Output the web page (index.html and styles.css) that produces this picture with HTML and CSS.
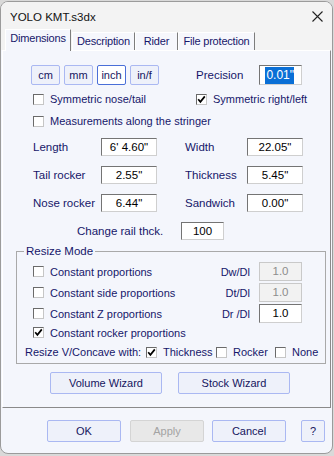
FILE: index.html
```html
<!DOCTYPE html>
<html>
	<head>
		<meta charset="UTF-8">
		<title>YOLO KMT.s3dx</title>
		<link rel="stylesheet" href="styles.css">
	</head>
	<body>
		<div class="window">
			<!-- title bar -->
			<div class="titlebar">
				<span class="title">YOLO KMT.s3dx</span>
				<svg class="close" width="11" height="11" viewBox="0 0 11 11">
					<path d="M0.5 0.5 L10.5 10.5 M10.5 0.5 L0.5 10.5" stroke="#222" stroke-width="1.1" fill="none"/>
				</svg>
			</div>

			<!-- tabs -->
			<div class="tabs">
				<div class="tab active">Dimensions</div>
				<div class="tab t-desc">Description</div>
				<div class="tab t-rider">Rider</div>
				<div class="tab t-file">File protection</div>
			</div>

			<div class="panel">
				<div class="units-row">
					<div class="units">
						<div class="btn unit">cm</div>
						<div class="btn unit">mm</div>
						<div class="btn unit on">inch</div>
						<div class="btn unit">in/f</div>
					</div>
					<span class="precision-label">Precision</span>
					<div class="field precision"><span class="sel">0.01"</span></div>
				</div>

				<div class="check-row first">
					<div class="check wide"><span class="box"></span>Symmetric nose/tail</div>
					<div class="check"><span class="box"><svg width="9" height="9" viewBox="0 0 9 9"><path d="M1.2 4.2 L3.4 6.8 L7.8 1.4" stroke="#000" stroke-width="1.7" fill="none"/></svg></span>Symmetric right/left</div>
				</div>
				<div class="check-row">
					<div class="check"><span class="box"></span>Measurements along the stringer</div>
				</div>

				<div class="dims">
					<span class="lbl">Length</span>
					<div class="field">6' 4.60"</div>
					<span></span>
					<span class="lbl">Width</span>
					<div class="field">22.05"</div>

					<span class="lbl">Tail rocker</span>
					<div class="field">2.55"</div>
					<span></span>
					<span class="lbl">Thickness</span>
					<div class="field">5.45"</div>

					<span class="lbl">Nose rocker</span>
					<div class="field">6.44"</div>
					<span></span>
					<span class="lbl">Sandwich</span>
					<div class="field">0.00"</div>
				</div>

				<div class="rail-row">
					<span class="lbl rail-lbl">Change rail thck.</span>
					<div class="field rail">100</div>
				</div>

				<fieldset class="group">
					<legend>Resize Mode</legend>
					<div class="resize-row">
						<div class="check rcol"><span class="box"></span>Constant proportions</div>
						<span class="ratio">Dw/Dl</span>
						<div class="field ratio-in off">1.0</div>
					</div>
					<div class="resize-row">
						<div class="check rcol"><span class="box"></span>Constant side proportions</div>
						<span class="ratio">Dt/Dl</span>
						<div class="field ratio-in off">1.0</div>
					</div>
					<div class="resize-row">
						<div class="check rcol"><span class="box"></span>Constant Z proportions</div>
						<span class="ratio">Dr /Dl</span>
						<div class="field ratio-in">1.0</div>
					</div>
					<div class="resize-row last">
						<div class="check rcol"><span class="box"><svg width="9" height="9" viewBox="0 0 9 9"><path d="M1.2 4.2 L3.4 6.8 L7.8 1.4" stroke="#000" stroke-width="1.7" fill="none"/></svg></span>Constant rocker proportions</div>
					</div>
					<div class="concave-row">
						<span class="concave-lbl">Resize V/Concave with:</span>
						<div class="check c-thick"><span class="box"><svg width="9" height="9" viewBox="0 0 9 9"><path d="M1.2 4.2 L3.4 6.8 L7.8 1.4" stroke="#000" stroke-width="1.7" fill="none"/></svg></span>Thickness</div>
						<div class="check c-rock"><span class="box"></span>Rocker</div>
						<div class="check"><span class="box"></span>None</div>
					</div>
				</fieldset>

				<div class="wizard-row">
					<div class="btn wizard">Volume Wizard</div>
					<div class="btn wizard">Stock Wizard</div>
				</div>
			</div>

			<!-- bottom buttons -->
			<div class="footer">
				<div class="btn action">OK</div>
				<div class="btn action disabled">Apply</div>
				<div class="btn action">Cancel</div>
				<div class="btn help">?</div>
			</div>
		</div>
	</body>
</html>
```

FILE: styles.css
```css
*{
	margin: 0;
	padding: 0;
	box-sizing: border-box;
}
body{
	background-color: #d9d9d9;
	font-family: "Liberation Sans", Arial, sans-serif;
	font-size: 11px;
	color: #16166a;
	overflow: hidden;
}
.window{
	width: 333px;
	height: 453px;
	margin-top: 1px;
	border: 1px solid #9b9b9b;
	border-radius: 8px;
	background-color: #f4f6fc;
	overflow: hidden;
	display: flex;
	flex-direction: column;
}

/* title bar */
.titlebar{
	height: 27px;
	background-color: #f3f3f3;
	display: flex;
	align-items: center;
	justify-content: space-between;
	padding: 2px 9px 0 9px;
}
.title{
	color: #111;
	font-size: 11.5px;
}
.close{
	display: block;
}

/* tabs */
.tabs{
	height: 21px;
	background-color: #f3f3f3;
	display: flex;
	align-items: flex-end;
	padding-left: 4px;
	position: relative;
	z-index: 1;
}
.tab{
	height: 18px;
	line-height: 17px;
	text-align: center;
	background-color: #f6f7fc;
	border-top: 1px solid #fff;
	border-left: 1px solid #fff;
	border-right: 1px solid #7d7d7d;
	font-size: 11px;
	letter-spacing: -0.2px;
}
.tab.active{
	width: 66px;
	height: 22px;
	line-height: 16px;
	margin-bottom: -1px;
	background-color: #f4f6fc;
}
.t-desc{
	width: 63px;
	margin-left: 1px;
}
.t-rider{
	width: 43px;
}
.t-file{
	width: 77px;
}

/* main panel */
.panel{
	margin: 0 1px 0 1px;
	border-top: 1px solid #fff;
	border-left: 1px solid #fff;
	border-right: 1px solid #8a8a8a;
	border-bottom: 1px solid #8a8a8a;
	padding-bottom: 13px;
}

.btn{
	background-color: #eef1fa;
	border: 1px solid #aab8f2;
	border-radius: 2px;
	text-align: center;
	color: #15155e;
}

.units-row{
	display: flex;
	align-items: center;
	height: 20px;
	margin-top: 14px;
	padding-left: 28px;
}
.units{
	display: flex;
	gap: 4px;
}
.unit{
	width: 29px;
	height: 20px;
	line-height: 18px;
}
.unit.on{
	background-color: #fff;
	border-color: #4a6fd8;
}
.precision-label{
	width: 63px;
	margin-left: 37px;
	font-size: 11.5px;
}

.field{
	height: 18px;
	line-height: 16px;
	background-color: #fff;
	border: 1px solid;
	border-color: #747474 #cfcfcf #cfcfcf #747474;
	color: #000;
	text-align: center;
	font-size: 11.5px;
}
.precision{
	width: 43px;
	height: 20px;
	line-height: 18px;
	text-align: right;
	padding-right: 7px;
	font-size: 12px;
}
.sel{
	background-color: #0a6fd6;
	color: #fff;
	padding: 1px 0 2px 1px;
}

.check-row{
	display: flex;
	align-items: center;
	height: 14px;
	margin-top: 8px;
	padding-left: 30px;
}
.check-row.first{
	margin-top: 7px;
}
.check{
	display: flex;
	align-items: center;
	white-space: nowrap;
}
.check.wide{
	width: 163px;
}
.box{
	width: 11px;
	height: 11px;
	margin-right: 6px;
	background-color: #fff;
	border: 1px solid;
	border-color: #6a6a6a #c6c6c6 #c6c6c6 #6a6a6a;
	display: flex;
	align-items: center;
	justify-content: center;
}

.dims{
	display: grid;
	grid-template-columns: 68px 56px 28px 62px 56px;
	grid-auto-rows: 18px;
	row-gap: 10px;
	align-items: center;
	margin-top: 10px;
	padding-left: 30px;
}
.lbl{
	font-size: 11.5px;
}

.rail-row{
	display: flex;
	align-items: center;
	height: 18px;
	margin-top: 10px;
	padding-left: 74px;
}
.rail-lbl{
	width: 104px;
}
.rail{
	width: 43px;
}

/* resize mode group */
.group{
	margin: 4px 4px 0 13px;
	border: 1px solid #a9a9a9;
	padding: 3px 0 3px 16px;
}
.group legend{
	margin-left: -9px;
	padding: 0 2px;
	line-height: 14px;
	font-size: 11.5px;
}
.resize-row{
	display: flex;
	align-items: center;
	height: 21px;
}
.resize-row.last{
	height: 17px;
}
.rcol{
	width: 170px;
}
.ratio{
	width: 47px;
	text-align: right;
}
.ratio-in{
	width: 43px;
	height: 19px;
	line-height: 17px;
	margin-left: 9px;
}
.ratio-in.off{
	background-color: #f2f2f2;
	color: #8d8d8d;
	border-color: #c9c9c9;
}
.concave-row{
	display: flex;
	align-items: center;
	height: 16px;
	margin: 3px 0 0 -8px;
}
.concave-lbl{
	width: 121px;
}
.c-thick{
	width: 70px;
}
.c-rock{
	width: 59px;
}

.wizard-row{
	display: flex;
	gap: 16px;
	margin-top: 8px;
	padding-left: 47px;
}
.wizard{
	width: 112px;
	height: 22px;
	line-height: 20px;
}

/* bottom buttons */
.footer{
	flex: 1;
	display: flex;
	align-items: flex-start;
	padding: 12px 0 0 46px;
}
.action{
	width: 74px;
	height: 22px;
	line-height: 20px;
	margin-right: 9px;
}
.action.disabled{
	background-color: #e8e8e8;
	border-color: #d4d4d4;
	color: #a3a3a3;
	margin-right: 8px;
}
.footer .action:nth-child(3){
	margin-right: 15px;
}
.help{
	width: 24px;
	height: 22px;
	line-height: 20px;
}
```
